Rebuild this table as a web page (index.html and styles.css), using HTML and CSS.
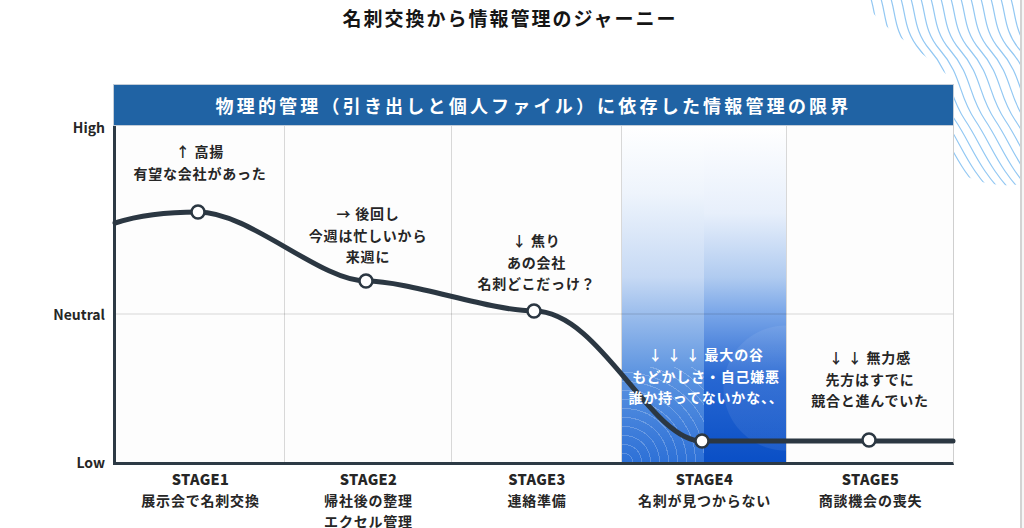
FILE: index.html
```html
<!DOCTYPE html>
<html lang="ja">
<head>
<meta charset="utf-8">
<title>名刺交換から情報管理のジャーニー</title>
<link rel="stylesheet" href="styles.css">
</head>
<body>
<div class="page">
  <svg class="waves" viewBox="860 0 162 192" width="162" height="192" aria-hidden="true">
    <defs>
      <clipPath id="waveclip">
        <path d="M864,0 L1022,0 L1022,184 C1000,188 968,182 955,168 C950,130 956,98 948,76 C924,50 880,30 864,0 Z"/>
      </clipPath>
      <path id="w" d="M0,-20 C20,0 8,25 30,50 S48,95 65,120 S88,170 120,200" fill="none" stroke="#93c8f3" stroke-width="1.2"/>
    </defs>
    <g clip-path="url(#waveclip)">
      <use href="#w" x="750"/><use href="#w" x="760"/><use href="#w" x="770"/><use href="#w" x="780"/>
      <use href="#w" x="790"/><use href="#w" x="800"/><use href="#w" x="810"/><use href="#w" x="820"/>
      <use href="#w" x="830"/><use href="#w" x="840"/><use href="#w" x="850"/><use href="#w" x="860"/>
      <use href="#w" x="870"/><use href="#w" x="880"/><use href="#w" x="890"/><use href="#w" x="900"/>
      <use href="#w" x="910"/><use href="#w" x="920"/><use href="#w" x="930"/><use href="#w" x="940"/>
      <use href="#w" x="950"/><use href="#w" x="960"/><use href="#w" x="970"/><use href="#w" x="980"/>
      <use href="#w" x="990"/><use href="#w" x="1000"/><use href="#w" x="1010"/><use href="#w" x="1020"/>
    </g>
  </svg>

  <h1 class="title">名刺交換から情報管理のジャーニー</h1>

  <div class="chart">
    <div class="corner"></div>
    <div class="banner">物理的管理（引き出しと個人ファイル）に依存した情報管理の限界</div>

    <div class="yaxis">
      <span class="yl yl-high">High</span>
      <span class="yl yl-neutral">Neutral</span>
      <span class="yl yl-low">Low</span>
    </div>

    <div class="plot">
      <div class="col"><p class="note n1">↑ 高揚<br>有望な会社があった</p></div>
      <div class="col"><p class="note n2">→ 後回し<br>今週は忙しいから<br>来週に</p></div>
      <div class="col"><p class="note n3">↓ 焦り<br>あの会社<br>名刺どこだっけ？</p></div>
      <div class="col col-valley"><p class="note n4">↓ ↓ ↓ 最大の谷<br>もどかしさ・自己嫌悪<br>誰か持ってないかな、、</p></div>
      <div class="col col-last"><p class="note n5">↓ ↓ 無力感<br>先方はすでに<br>競合と進んでいた</p></div>

      <svg class="curve" viewBox="116 126 837 336" width="837" height="336" aria-hidden="true">
        <line x1="116" y1="314" x2="953" y2="314" stroke="rgba(0,0,0,0.15)" stroke-width="1"/>
        <path d="M115,223 C140,215 170,212 198,212 C250,212 320,281 366,281 C410,281 490,311 534,311 C600,311 650,441 702,441 L953,441"
              fill="none" stroke="#2b3742" stroke-width="5" stroke-linecap="round"/>
        <g fill="#fff" stroke="#2b3742" stroke-width="2.5">
          <circle cx="198" cy="212" r="6.5"/>
          <circle cx="366" cy="281" r="6.5"/>
          <circle cx="534" cy="311" r="6.5"/>
          <circle cx="702" cy="441" r="6.5"/>
          <circle cx="869" cy="440" r="6.5"/>
        </g>
      </svg>
    </div>

    <div class="corner"></div>
    <div class="stages">
      <div class="stage"><b>STAGE1</b><span>展示会で名刺交換</span></div>
      <div class="stage"><b>STAGE2</b><span>帰社後の整理</span><span>エクセル管理</span></div>
      <div class="stage"><b>STAGE3</b><span>連絡準備</span></div>
      <div class="stage"><b>STAGE4</b><span>名刺が見つからない</span></div>
      <div class="stage"><b>STAGE5</b><span>商談機会の喪失</span></div>
    </div>
  </div>
</div>
</body>
</html>
```

FILE: styles.css
```css
* { box-sizing: border-box; }

html, body {
  margin: 0;
  padding: 0;
  background: #f6f6f6;
}

body {
  font-family: "Noto Sans CJK JP", "Noto Sans", sans-serif;
  color: #262626;
}

.page {
  position: relative;
  width: 1022px;
  height: 528px;
  background: #fff;
  border-right: 2px solid #d3d3d3;
  overflow: hidden;
}

.waves {
  position: absolute;
  top: 0;
  left: 860px;
  overflow: hidden;
}

.title {
  margin: 0;
  height: 36px;
  line-height: 36px;
  font-size: 19px;
  font-weight: 700;
  letter-spacing: 2px;
  text-align: center;
  color: #151515;
  position: relative;
}

.chart {
  margin-top: 48px;
  display: grid;
  grid-template-columns: 113px 841px;
  grid-template-rows: 42px 339px auto;
}

.banner {
  position: relative;
  background: #2063a4;
  border: 1px solid #c3cdd8;
  color: #fff;
  font-size: 18px;
  font-weight: 700;
  letter-spacing: 3.2px;
  line-height: 40px;
  text-align: center;
}

.yaxis {
  display: grid;
  grid-template-rows: 188px 148px;
  padding-right: 8px;
  text-align: right;
  font-size: 14px;
  font-weight: 700;
  color: #262626;
}

.yl {
  display: block;
  grid-column: 1;
  line-height: 20px;
}

.yl-high { grid-row: 1; align-self: start; margin-top: -9px; }
.yl-neutral { grid-row: 2; align-self: start; margin-top: -10px; }
.yl-low { grid-row: 2; align-self: end; margin-bottom: -10px; }

.plot {
  position: relative;
  display: grid;
  grid-template-columns: 169px 167px 170px 165px 1fr;
  border-left: 3px solid #2d3a45;
  border-bottom: 3px solid #2d3a45;
  border-right: 1px solid #cfcfcf;
  background: #fdfdfd;
}

.col {
  border-right: 1px solid #d8d8d8;
}

.col-last {
  border-right: none;
}

.col-valley {
  background:
    repeating-radial-gradient(circle at 2px 100%, rgba(255,255,255,0) 0, rgba(255,255,255,0) 8px, rgba(255,255,255,0.22) 8px, rgba(255,255,255,0.22) 9px) left bottom / 82px 95px no-repeat,
    radial-gradient(circle at 100% 78%, rgba(255,255,255,0.07) 0, rgba(255,255,255,0.07) 62px, rgba(255,255,255,0) 63px) right top / 50% 100% no-repeat,
    linear-gradient(180deg, #ffffff 0%, #eef4fc 20%, #c6d9f4 45%, #9bbdec 56%, #5b93e0 74%, #2e71d7 100%) left top / 50% 100% no-repeat,
    linear-gradient(180deg, #ffffff 0%, #e7effb 26%, #b0cbf0 45%, #78a5e8 56%, #2767d2 75%, #0a4fc6 100%) right top / 50% 100% no-repeat;
}

.note {
  position: relative;
  z-index: 2;
  margin: 0;
  font-size: 14px;
  font-weight: 700;
  letter-spacing: 0.8px;
  line-height: 21.5px;
  text-align: center;
  color: #262626;
}

.n1 { padding-top: 15px; }
.n2 { padding-top: 77px; }
.n3 { padding-top: 104px; }
.n4 { padding-top: 218px; padding-left: 4px; color: #fff; }
.n5 { padding-top: 221px; }

.curve {
  position: absolute;
  top: 0;
  left: 0;
  z-index: 1;
  overflow: visible;
}

.stages {
  display: grid;
  grid-template-columns: 169px 167px 170px 165px 1fr;
  margin-left: 3px;
  padding-top: 3px;
}

.stage {
  display: flex;
  flex-direction: column;
  align-items: center;
  font-size: 14px;
  font-weight: 700;
  letter-spacing: 0.8px;
  line-height: 21.5px;
  color: #262626;
}

.stage b {
  font-size: 14.5px;
  letter-spacing: 0.3px;
}
```
